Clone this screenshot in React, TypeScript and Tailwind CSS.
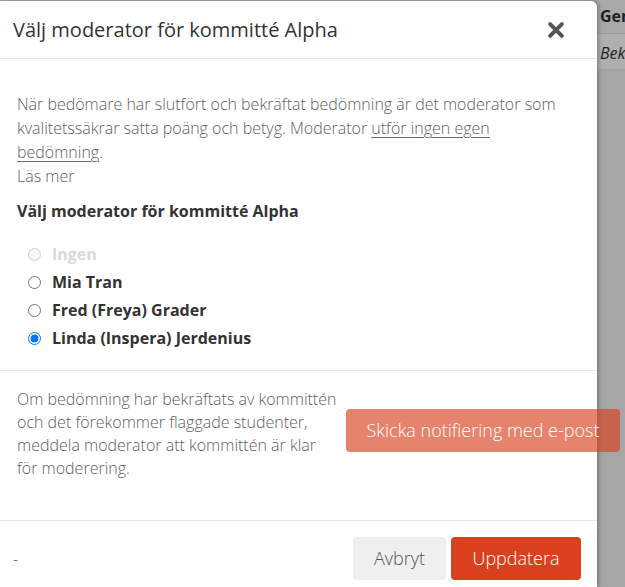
import React, { useState } from 'react';

const moderators = [
    { id: 'none', name: 'Ingen', disabled: true },
    { id: 'mia', name: 'Mia Tran' },
    { id: 'fred', name: 'Fred (Freya) Grader' },
    { id: 'linda', name: 'Linda (Inspera) Jerdenius' },
];

const CloseIcon: React.FC = () => (
    <svg viewBox="0 0 20 20" className="h-[18px] w-[18px]" fill="none">
        <path d="M3.5 3.5 L16.5 16.5 M16.5 3.5 L3.5 16.5" stroke="#555555" strokeWidth="4.4" strokeLinecap="round" />
    </svg>
);

const App: React.FC = () => {
    const [selected, setSelected] = useState('linda');

    return (
        <div
            className="flex h-[587px] w-[625px] overflow-hidden bg-[#a6a6a6]"
            style={{ fontFamily: '"Open Sans", "Liberation Sans", sans-serif' }}
        >
            {/* Modal */}
            <div className="relative z-10 mt-px flex w-[597px] shrink-0 flex-col rounded-tr-[6px] bg-white shadow-[2px_0_4px_rgba(0,0,0,0.25)]">
                <div className="flex h-[58px] shrink-0 items-center justify-between border-b border-[#e5e5e5] pl-[13px] pr-[32px]">
                    <h2 className="text-[20px] font-normal text-[#333]">Välj moderator för kommitté Alpha</h2>
                    <button type="button" className="flex items-center">
                        <CloseIcon />
                    </button>
                </div>

                <div className="px-[17px] pt-[33px] pb-[18px]">
                    <p className="max-w-[550px] text-[16px] font-light leading-[24px] text-[#5e5e5e]">
                        När bedömare har slutfört och bekräftat bedömning är det moderator som kvalitetssäkrar satta poäng och betyg. Moderator{' '}
                        <span className="underline decoration-[#666] underline-offset-[3px]">utför ingen egen bedömning</span>.
                        <br />
                        Läs mer
                    </p>

                    <h3 className="mt-[11px] text-[16px] font-bold leading-[24px] text-[#333]">Välj moderator för kommitté Alpha</h3>

                    <div className="mt-[17px] flex flex-col pl-[11px]">
                        {moderators.map((m) => (
                            <label key={m.id} className="flex h-[28px] items-center gap-[11px]">
                                <input
                                    type="radio"
                                    name="moderator"
                                    className="m-0 h-[13px] w-[13px] accent-[#0075ff]"
                                    disabled={m.disabled}
                                    checked={selected === m.id}
                                    onChange={() => setSelected(m.id)}
                                />
                                <span className={`text-[16px] font-bold ${m.disabled ? 'text-[#d9d9d9]' : 'text-[#333]'}`}>{m.name}</span>
                            </label>
                        ))}
                    </div>
                </div>

                <div className="flex h-[150px] shrink-0 items-start border-t border-[#e5e5e5] px-[17px] pt-[17px]">
                    <p className="w-[321px] shrink-0 text-[16px] font-light leading-[23px] text-[#5e5e5e]">
                        Om bedömning har bekräftats av kommittén och det förekommer flaggade studenter, meddela moderator att kommittén är klar för moderering.
                    </p>
                    <button
                        type="button"
                        disabled
                        className="ml-[8px] mt-[21px] h-[43px] w-[274px] shrink-0 whitespace-nowrap rounded-[4px] bg-[#d9411e]/65 text-[18px] font-light text-white"
                    >
                        Skicka notifiering med e-post
                    </button>
                </div>

                <div className="flex flex-1 items-start justify-between border-t border-[#e5e5e5] pl-[13px] pr-[16px] pt-[16px]">
                    <span className="mt-[10px] text-[16px] font-light text-[#555]">-</span>
                    <div className="flex gap-[5px]">
                        <button type="button" className="h-[43px] w-[93px] rounded-[4px] bg-[#efefef] text-[18px] font-light text-[#555]">
                            Avbryt
                        </button>
                        <button type="button" className="h-[43px] w-[130px] rounded-[4px] bg-[#d9411e] text-[18px] font-light text-white">
                            Uppdatera
                        </button>
                    </div>
                </div>
            </div>

            {/* Page behind the overlay */}
            <div className="flex flex-1 flex-col whitespace-nowrap text-[16px] text-[#1f1f1f]">
                <div className="h-[34px] border-b border-[#9c9c9c] bg-[#a9a9a9] pl-[3px] pt-[4px] font-bold">Generell</div>
                <div className="h-[36px] border-b border-[#9f9f9f] bg-[#afafaf] pl-[3px] pt-[7px] italic">Bekräftad</div>
            </div>
        </div>
    );
};

export default App;
